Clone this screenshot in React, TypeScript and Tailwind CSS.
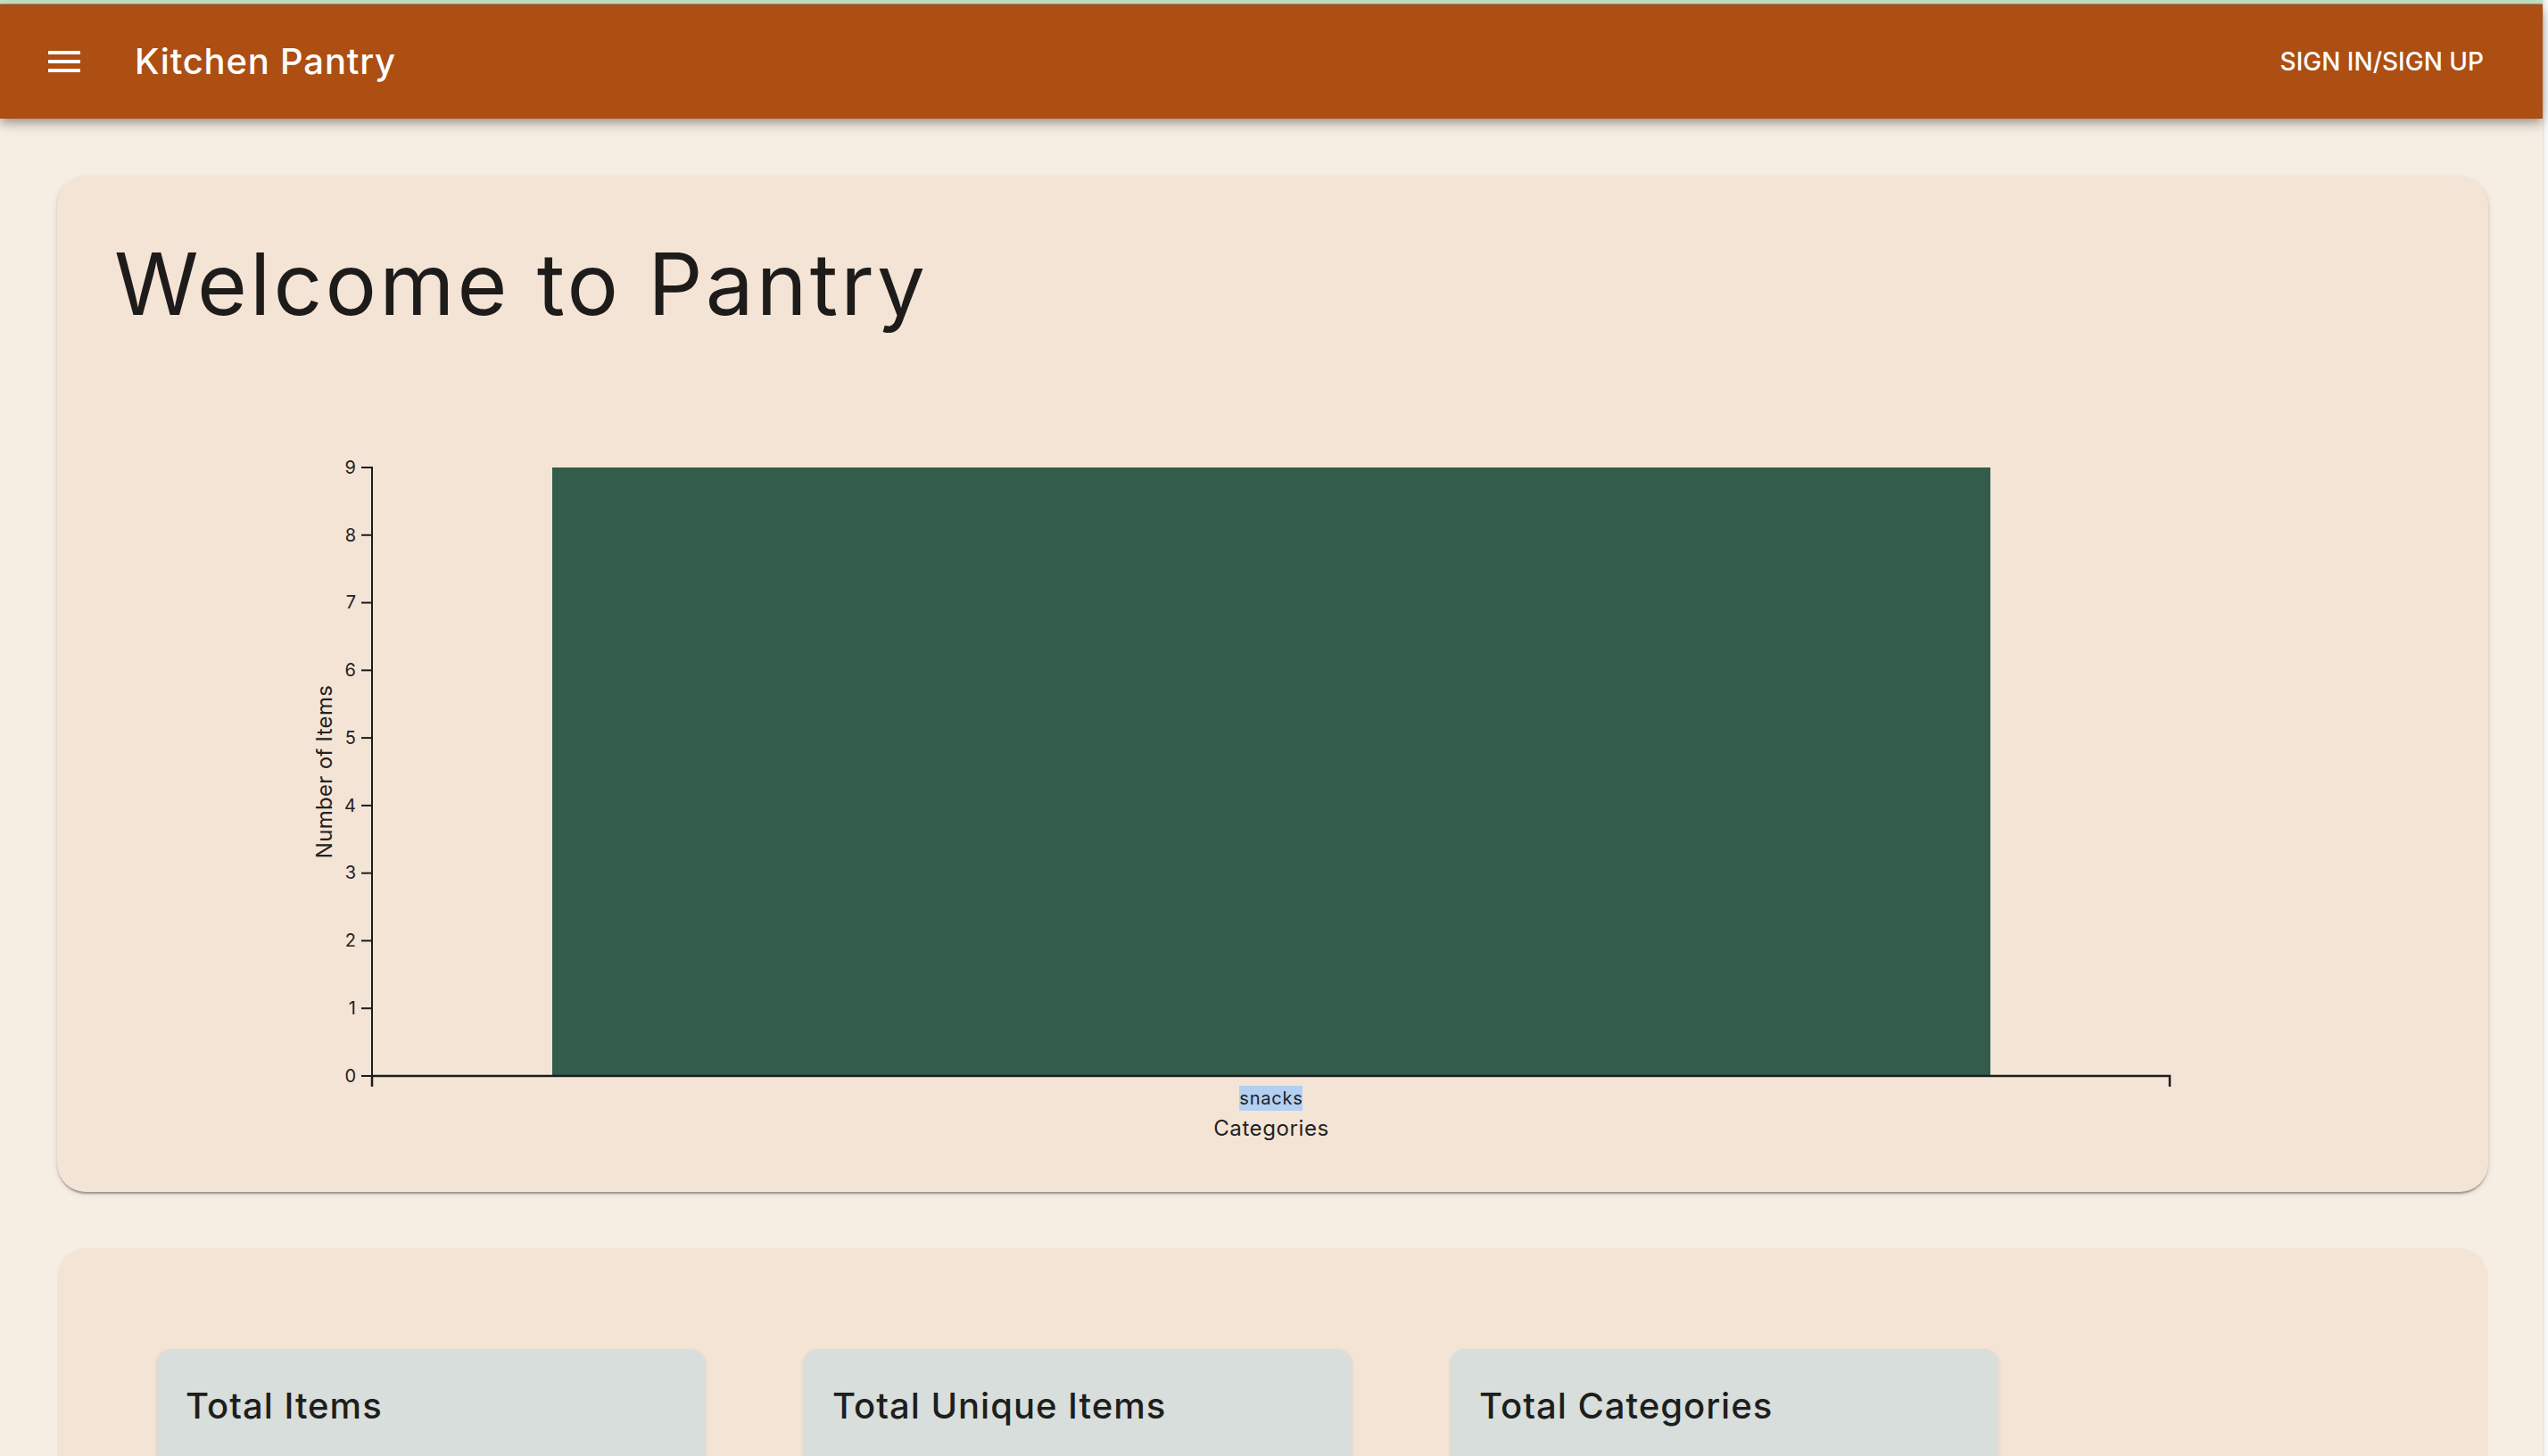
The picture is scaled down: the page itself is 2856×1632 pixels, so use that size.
import React from 'react';

const FONT = "font-['Inter','Liberation_Sans',sans-serif]";

const counts = [{ category: 'snacks', count: 9 }];

const MenuIcon = () => (
  <svg viewBox="0 0 24 24" className="w-[48px] h-[48px] fill-white">
    <path d="M3 18h18v-2H3zm0-5h18v-2H3zm0-7v2h18V6z" />
  </svg>
);

// bar chart, coordinates relative to the card's left edge
const CategoryChart = () => {
  const x0 = 353;
  const x1 = 2368;
  const top = 150;
  const zero = 832;
  const max = 9;
  const step = (zero - top) / max;
  const ticks = Array.from({ length: max + 1 }, (_, i) => i);
  const barX = 555;
  const barW = 1612;
  const center = barX + barW / 2;

  return (
    <svg width={2725} height={962} className="block" style={{ fontFamily: 'Inter, "Liberation Sans", sans-serif' }}>
      {counts.map((d) => (
        <rect key={d.category} x={barX} y={zero - d.count * step} width={barW} height={d.count * step} fill="#335c4b" />
      ))}
      {/* y axis */}
      <path d={`M${x0 - 12},${top}H${x0}V${zero}H${x0 - 12}`} stroke="#1c1c1c" strokeWidth={2} fill="none" />
      {ticks.map((t) => (
        <g key={t}>
          <line x1={x0 - 12} x2={x0} y1={zero - t * step} y2={zero - t * step} stroke="#1c1c1c" strokeWidth={2} />
          <text x={x0 - 17} y={zero - t * step} dy="0.34em" textAnchor="end" fontSize={20} fill="#222" letterSpacing={1}>
            {t}
          </text>
        </g>
      ))}
      {/* x axis */}
      <path d={`M${x0},${zero + 12}V${zero}H${x1}V${zero + 12}`} stroke="#1c1c1c" strokeWidth={2.5} fill="none" />
      <rect x={center - 36} y={843} width={71} height={28} fill="#b3cff2" />
      <text x={center} y={864} textAnchor="middle" fontSize={20} fill="#222" letterSpacing={0.8}>
        snacks
      </text>
      <text x={center} y={899} textAnchor="middle" fontSize={24} fill="#222" letterSpacing={0.6}>
        Categories
      </text>
      <text transform="translate(308,491) rotate(-90)" textAnchor="middle" fontSize={24} fill="#222" letterSpacing={0.3}>
        Number of Items
      </text>
    </svg>
  );
};

const StatCard = ({ title }: { title: string }) => (
  <div className="w-[614px] h-[240px] bg-[#d8dedb] rounded-[16px] shadow-[0_2px_4px_rgba(0,0,0,0.12)] p-[32px]">
    <div className="text-[40px] leading-[64px] font-medium tracking-[0.025em] text-[#1e1e1e]">{title}</div>
  </div>
);

export default function App() {
  return (
    <div className={`flex w-full h-[1632px] overflow-hidden ${FONT}`}>
      <div className="flex-1 flex flex-col bg-[#f6eee3]">
        <div className="h-[4px] shrink-0 bg-[#c4e2c6]" />
        <div className="h-[1px] shrink-0 bg-[#8fa28f]" />
        <header className="relative z-10 h-[128px] shrink-0 bg-[#ad4e13] flex items-center pl-[48px] pr-[66px] text-white shadow-[0_4px_8px_-2px_rgba(0,0,0,0.2),0_8px_10px_0_rgba(0,0,0,0.14),0_2px_20px_0_rgba(0,0,0,0.12)]">
          <MenuIcon />
          <div className="ml-[55px] text-[40px] leading-[64px] font-medium tracking-[0.02em]">Kitchen Pantry</div>
          <div className="ml-auto text-[28px] font-medium uppercase">Sign in/Sign up</div>
        </header>

        <main className="shrink-0 pt-[65px] pl-[64px]">
          <section className="w-[2725px] h-[1138px] bg-[#f4e4d6] rounded-[32px] shadow-[0_4px_2px_-2px_rgba(0,0,0,0.2),0_2px_2px_0_rgba(0,0,0,0.14),0_2px_6px_0_rgba(0,0,0,0.12)]">
            <h1 className="px-[64px] pt-[64px] text-[96px] leading-[112px] font-normal tracking-[0.033em] text-[#1e1c1a]">Welcome to Pantry</h1>
            <CategoryChart />
          </section>

          <section className="mt-[63px] w-[2725px] h-[400px] bg-[#f4e4d6] rounded-[32px] pt-[113px] pl-[112px] flex gap-[111px]">
            <StatCard title="Total Items" />
            <StatCard title="Total Unique Items" />
            <StatCard title="Total Categories" />
          </section>
        </main>
      </div>
      <div className="w-[6px] shrink-0 border-l-[2px] border-[#e8e8e8] bg-[#f7f7f7]" />
    </div>
  );
}
